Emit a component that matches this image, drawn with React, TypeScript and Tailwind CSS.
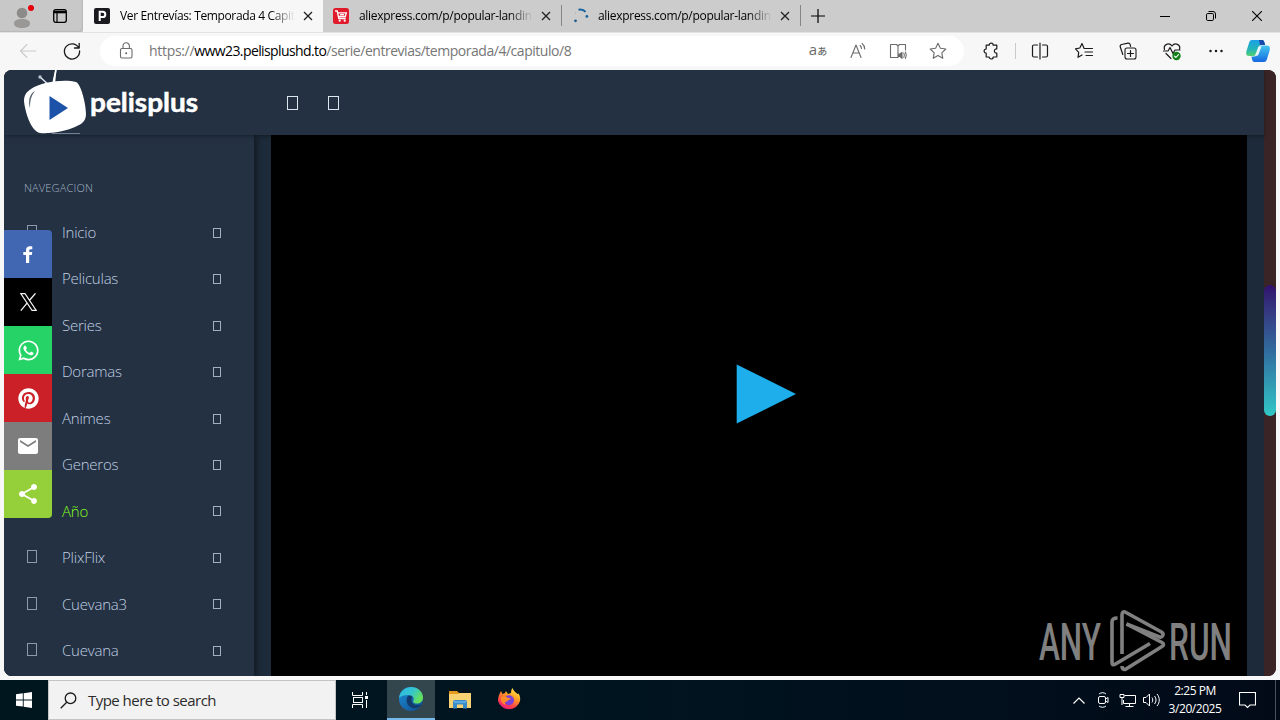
import type { ReactNode } from "react";
import { FaPinterest, FaWhatsapp } from "react-icons/fa6";
import { MdEmail, MdShare } from "react-icons/md";

type NavItem = { label: string; active?: boolean };

const navItems: NavItem[] = [
  { label: "Inicio" },
  { label: "Peliculas" },
  { label: "Series" },
  { label: "Doramas" },
  { label: "Animes" },
  { label: "Generos" },
  { label: "Año", active: true },
  { label: "PlixFlix" },
  { label: "Cuevana3" },
  { label: "Cuevana" },
];

const shareButtons = [
  { name: "facebook", className: "bg-[#4267b2] rounded-tr", icon: <FacebookLogo /> },
  { name: "x", className: "bg-black", icon: <XLogo /> },
  { name: "whatsapp", className: "bg-[#25d366]", icon: <FaWhatsapp size={23} /> },
  { name: "pinterest", className: "bg-[#cb2027]", icon: <FaPinterest size={21} /> },
  { name: "email", className: "bg-[#7d7d7d]", icon: <MdEmail size={24} /> },
  { name: "share", className: "bg-[#95d03a] rounded-br", icon: <MdShare size={24} /> },
];

function FacebookLogo() {
  return (
    <svg width="10" height="17" viewBox="0 0 10 17" className="mr-[1px]">
      <path d="M3 17V9H.3V6H3V4.200C3 1.500 4.500.3 7 .3c1 0 1.800.1 2.300.2v2.700H7.800C6.500 3.200 6.200 3.800 6.200 4.800V6h3.100l-.5 3H6.200v8z" fill="#fff" />
    </svg>
  );
}

function XLogo() {
  return (
    <svg width="17" height="18" viewBox="0 0 17 18" fill="none" stroke="#f4f4f4" strokeWidth="1.100">
      <path d="M.8.600h4.200L16.200 17.400H12z" />
      <path d="M15.500.300L9.300 7.500M7.300 9.900L.8 17.600" strokeWidth="1.300" />
    </svg>
  );
}

type IconProps = { children: ReactNode; size?: number; className?: string };

// Thin line icon, drawn on a 20x20 grid
function Line({ children, size = 20, className = "" }: IconProps) {
  return (
    <svg
      width={size}
      height={size}
      viewBox="0 0 20 20"
      fill="none"
      stroke="currentColor"
      strokeWidth="1.1"
      strokeLinecap="round"
      strokeLinejoin="round"
      className={`shrink-0 ${className}`}
    >
      {children}
    </svg>
  );
}

function Close() {
  return (
    <svg width="10" height="10" viewBox="0 0 10 10" stroke="#222" strokeWidth="1.3" className="shrink-0">
      <path d="M1 1l8 8M9 1L1 9" />
    </svg>
  );
}

function TabTitle({ children, className }: { children: ReactNode; className: string }) {
  return (
    <span
      className={`shrink-0 whitespace-nowrap text-[12px] leading-4 text-black [mask-image:linear-gradient(to_right,black_86%,transparent)] ${className}`}
    >
      {children}
    </span>
  );
}

function TabBar() {
  return (
    <div className="flex h-8 bg-[#cccccc]">
      <div className="flex h-8 w-[83px] items-center rounded-br bg-[#c8c8c8] shadow-[inset_-1px_-1px_1px_#b8b8b8]">
        <svg width="24" height="26" viewBox="0 0 24 26" className="ml-[10px]">
          <circle cx="12" cy="10" r="5.3" fill="#8d8b8a" />
          <path d="M4 20.500c0-3 3-4.500 8-4.500s8 1.500 8 4.500-3.500 4.500-8 4.500-8-1.500-8-4.500z" fill="#9a9897" />
          <circle cx="21" cy="5" r="3" fill="#e8000b" />
        </svg>
        <svg width="14" height="14" viewBox="0 0 14 14" fill="none" stroke="#000" className="ml-[19px]">
          <rect x=".7" y=".7" width="12.600" height="12.600" rx="2" strokeWidth="1.300" />
          <path d="M1 3h12" strokeWidth="2.600" />
          <path d="M4 3v10" strokeWidth="1.200" />
        </svg>
      </div>
      <div className="flex h-8 w-[240px] items-center bg-[#f7f7f7] pl-[11px]">
        <svg width="16" height="16" viewBox="0 0 16 16">
          <rect width="16" height="16" rx="2" fill="#1b1b1f" />
          <path d="M5.700 13V3.800h3a2.500 2.500 0 0 1 0 5.200h-3" fill="none" stroke="#fff" strokeWidth="2" />
        </svg>
        <TabTitle className="ml-[10px] w-[175px] tracking-[-0.36px]">Ver Entrevías: Temporada 4 Capit</TabTitle>
        <div className="ml-2"><Close /></div>
      </div>
      <div className="flex h-8 w-[239px] items-center rounded-bl-md border-r border-[#8b8b8b] pl-[10px] [border-image:linear-gradient(transparent_18%,#858585_18%,#858585_80%,transparent_80%)_1]">
        <svg width="16" height="16" viewBox="0 0 16 16">
          <rect width="16" height="16" rx="2.500" fill="#e01a2b" />
          <g fill="none" stroke="#fff" strokeWidth="1.300">
            <path d="M2 3h2.200l1.600 7.500h7M4.700 4.800h8.600l-1 3.700H5.500" />
            <path d="M7 6.700h4" />
          </g>
          <circle cx="6.700" cy="12.700" r="1.100" fill="#fff" />
          <circle cx="11.700" cy="12.700" r="1.100" fill="#fff" />
        </svg>
        <TabTitle className="ml-[10px] w-[174px] tracking-[-0.3px]">aliexpress.com/p/popular-landin</TabTitle>
        <div className="ml-[8px]"><Close /></div>
      </div>
      <div className="flex h-8 w-[239px] items-center border-r border-[#8b8b8b] pl-[11px] [border-image:linear-gradient(transparent_18%,#858585_18%,#858585_80%,transparent_80%)_1]">
        <svg width="16" height="16" viewBox="0 0 16 16">
          <path d="M5.500 1.700c3-.7 5.300 0 7 2.200" stroke="#17639f" strokeWidth="2" fill="none" />
          <circle cx="13.900" cy="8.400" r="1.400" fill="#17639f" />
          <circle cx="2.500" cy="4.800" r=".6" fill="#8fabc4" />
          <circle cx="2.500" cy="12.800" r="1.400" fill="#1c5c92" />
        </svg>
        <TabTitle className="ml-[9px] w-[174px] tracking-[-0.3px]">aliexpress.com/p/popular-landin</TabTitle>
        <div className="ml-[8px]"><Close /></div>
      </div>
      <div className="flex w-[34px] items-center justify-center">
        <svg width="14" height="14" viewBox="0 0 14 14" stroke="#000" strokeWidth="1.200">
          <path d="M7 0v14M0 7h14" />
        </svg>
      </div>
      <div className="ml-auto flex h-8 text-black">
        <div className="flex w-[46px] items-center justify-center">
          <svg width="10" height="10" viewBox="0 0 10 10" stroke="currentColor"><path d="M0 5.500h10" /></svg>
        </div>
        <div className="flex w-[46px] items-center justify-center">
          <svg width="10" height="10" viewBox="0 0 10 10" fill="none" stroke="currentColor">
            <rect x=".5" y="2.500" width="7" height="7" rx="1.300" />
            <path d="M2.500.5h4.500a2.500 2.500 0 0 1 2.500 2.500v4.500" />
          </svg>
        </div>
        <div className="flex w-[46px] items-center justify-center">
          <svg width="10" height="10" viewBox="0 0 10 10" stroke="currentColor" strokeWidth="1.100"><path d="M0 0l10 10M10 0L0 10" /></svg>
        </div>
      </div>
    </div>
  );
}

function Slot({ children, className = "w-[44px]" }: { children: ReactNode; className?: string }) {
  return <div className={`flex h-[30px] shrink-0 items-center justify-center ${className}`}>{children}</div>;
}

function Toolbar() {
  return (
    <div className="flex h-[38px] items-center border-t border-[#e3e3e3] bg-[#f7f7f7] pb-[1px] pl-[6px] text-[#1b1b1b]">
      <Slot>
        <Line className="text-[#cccccc]"><path d="M18 10H2.500M9 3.500L2.500 10 9 16.500" /></Line>
      </Slot>
      <Slot>
        <Line><path d="M16.800 7A7.600 7.600 0 1 0 17.600 10M17.200 2.300V7h-4.700" strokeWidth="1.300" /></Line>
      </Slot>
      <div className="ml-[6px] flex h-[30px] w-[864px] items-center rounded-full bg-white pr-[6px] pl-[16px] text-[#6b6b6b]">
        <Line>
          <rect x="4.500" y="7.500" width="11.500" height="9.500" rx="1.500" />
          <path d="M7 7.500V5a3.200 3.200 0 0 1 6.400 0v2.500" />
          <circle cx="10.200" cy="12.200" r=".5" fill="currentColor" />
        </Line>
        <div className="ml-[13px] text-[14px] leading-5 tracking-[-0.47px] whitespace-nowrap text-[#767676]">
          <span className="tracking-[-0.31px]">https://</span>
          <span className="tracking-[-0.6px] text-black">www23.pelisplushd.to</span>/serie/entrevias/temporada/4/capitulo/8
        </div>
        <div className="ml-auto flex">
          <Slot className="w-10">
            <span className="flex items-baseline pb-[3px] text-[15px] leading-none">a<span className="font-['Noto_Sans_CJK_JP',sans-serif] text-[10px] leading-none font-medium">あ</span></span>
          </Slot>
          <Slot className="w-10">
            <Line>
              <path d="M3 16.500L8 4l5 12.500M4.800 12h6.500M12 4.500c1 .8 1.500 1.800 1.500 3M14 2.500c1.700 1.300 2.700 3 2.700 5.500" />
            </Line>
          </Slot>
          <Slot className="w-10">
            <Line>
              <path d="M10 16.500H2.500v-13h6L10 5l1.500-1.500h6V9M10 5v11.500" />
              <path d="M10.500 13v2.500h1.500l2 1.800v-6l-2 1.700z" fill="currentColor" />
              <path d="M15.800 12c.8 1.500.8 3 0 4.500M17.500 11c1 2 1 4.500 0 6.500" />
            </Line>
          </Slot>
          <Slot className="w-10">
            <Line><path d="M10 2.300l2.400 5 5.400.7-4 3.800 1 5.500-4.800-2.700-4.800 2.700 1-5.500-4-3.800 5.400-.7z" /></Line>
          </Slot>
        </div>
      </div>
      <div className="ml-[5px] flex items-center">
        <Slot>
          <Line>
            <path d="M5.200 4.200h3a2 2 0 0 1 4 0h3.600v3.600c-3.200-.2-3.200 4.600 0 4.400v3.800h-3.600a2 2 0 0 1-4 0h-3v-3.800a2 2 0 0 1 0-4.200z" strokeWidth="1.200" />
          </Line>
        </Slot>
        <div className="mx-[2px] h-4 w-px bg-[#c9c9c9]" />
        <Slot>
          <Line><path d="M7.500 4H4a1.500 1.500 0 0 0-1.500 1.500v9A1.500 1.500 0 0 0 4 16h3.500M12.500 4H16a1.500 1.500 0 0 1 1.500 1.500v9A1.500 1.500 0 0 1 16 16h-3.500M10 2v16" strokeWidth="1.200" /></Line>
        </Slot>
        <Slot>
          <Line><path d="M11.500 7.500L10 7.300 8 2.500 5.800 7l-4.300.8 3.200 3.500-.7 5 4-2.300M12 7.500h6.500M11 11h7.500M12 14.500h6.500" strokeWidth="1.200" /></Line>
        </Slot>
        <Slot>
          <Line>
            <rect x="7" y="7" width="11" height="11" rx="2" />
            <path d="M12.500 9.500v6M9.500 12.500h6M4.800 13.500L2.300 6a2 2 0 0 1 1.200-2.500l6.500-1.300a2 2 0 0 1 2.200 1.500l.4 1.600" strokeWidth="1.200" />
          </Line>
        </Slot>
        <Slot>
          <Line>
            <path d="M2.500 8.500C1 3.500 7 1 10 5c3-4 9-1.500 7.500 3.500M1.500 10H6l2-3.500 3 6 2-3.500h5M4 12.500l5 5" strokeWidth="1.200" />
            <circle cx="14.500" cy="15" r="4.200" fill="#15801a" stroke="none" />
            <path d="M12.500 15.200l1.400 1.300 2.600-2.800" stroke="#fff" />
          </Line>
        </Slot>
        <Slot>
          <Line><path d="M4.500 10h.01M10 10h.01M15.500 10h.01" strokeWidth="2.500" /></Line>
        </Slot>
        <Slot className="w-10">
          <svg width="24" height="24" viewBox="0 0 24 24">
            <defs>
              <linearGradient id="cpA" x1="0" y1="0" x2="0" y2="1"><stop stopColor="#1b9ee8" /><stop offset=".6" stopColor="#25b7b5" /><stop offset="1" stopColor="#59cf70" /></linearGradient>
              <linearGradient id="cpB" x1="0" y1="0" x2="0" y2="1"><stop stopColor="#45c6ef" /><stop offset="1" stopColor="#1669e0" /></linearGradient>
            </defs>
            <path d="M6 1h10c2 0 2.500 2 3 5h-3c-2 0-3 1-3.600 3l-1.600 5c-.6 2-1.300 3-4 3H3c-3 0-3.300-2.500-2.500-5L3 4c.6-2 1.300-3 3-3z" fill="url(#cpA)" />
            <path d="M13 1h3c2 0 2.500 2 3 5h-5z" fill="#1749a8" />
            <path d="M18 23H8.500c-2 0-2.500-2-3-5.500H8c2 0 3-1 3.600-3L13 9.500c.6-2 1.500-3 4-3h4c3 0 3.300 2.500 2.500 5.500L21 20c-.6 2-1.300 3-3 3z" fill="url(#cpB)" />
            <path d="M12.500 7.500h3l-3.500 9H9z" fill="#eaf6fb" />
          </svg>
        </Slot>
      </div>
    </div>
  );
}

function PelisplusLogo() {
  return (
    <svg width="178" height="65" viewBox="0 0 178 65" className="ml-[18px]">
      <path d="M28 16L18 7M31 14l3-14" stroke="#e8edf3" strokeWidth="1.400" />
      <path d="M30 15l3-15 1.500 0-1.500 14z" fill="#fff" />
      <circle cx="18" cy="7" r="1.700" fill="#b9c6d4" />
      <path d="M9 19C20 11 44 9 54 12c5 2 10 22 10 32 0 7-4 10-11 13-9 4-25 7-35 6C9 61 3 42 2 31c0-5 2-9 7-12z" fill="#fff" />
      <path d="M13 21c-6 3-7 11-5 17 0-7 1-12 5-17z" fill="#5d6670" />
      <path d="M27.500 26v24L46 38z" fill="#1c52a8" />
      <path d="M30 63.500h28" stroke="#738091" />
      <text x="68" y="42" textLength="108" lengthAdjust="spacingAndGlyphs" fill="#fff" stroke="#fff" strokeWidth=".5" fontFamily="Lato, sans-serif" fontWeight="700" fontSize="26">
        pelisplus
      </text>
    </svg>
  );
}

function Sidebar() {
  return (
    <aside className="z-10 h-full w-[250px] shrink-0 bg-[#233143] pt-[44px] shadow-[2px_0_6px_rgba(0,0,0,0.45)]">
      <div className="ml-5 text-[11px] leading-[18px] font-light tracking-[0.16px] text-[#a6b3c2]">NAVEGACION</div>
      <ul className="mt-[12.6px]">
        {navItems.map((item) => (
          <li key={item.label} className="flex h-[46.45px] items-center">
            <span className="mb-[2px] ml-[23px] h-[13px] w-[10px] shrink-0 border border-[#8c9aab]" />
            <span
              className={`mb-[1.600px] ml-[25px] text-[15px] leading-5 font-light tracking-[-0.22px] ${
                item.active ? "text-[#86ff1c]" : "text-[#c0d0e2]"
              }`}
            >
              {item.label}
            </span>
            <span className="mr-[33px] ml-auto h-[10px] w-[8px] border border-[#9fb0c2]" />
          </li>
        ))}
      </ul>
    </aside>
  );
}

function ShareBar() {
  return (
    <div className="absolute top-[160px] left-0 z-20 flex w-12 flex-col text-white">
      {shareButtons.map((b) => (
        <button key={b.name} className={`flex h-12 w-12 items-center justify-center ${b.className}`}>
          {b.icon}
        </button>
      ))}
    </div>
  );
}

function Watermark() {
  return (
    <svg width="200" height="64" viewBox="0 0 200 64" className="absolute right-[9px] bottom-[3px]">
      <g fill="#808080" fontFamily="Roboto, sans-serif" fontSize="52" fontWeight="500">
        <text x="1" y="50.500" textLength="62" lengthAdjust="spacingAndGlyphs">ANY</text>
        <text x="131" y="50.500" textLength="63" lengthAdjust="spacingAndGlyphs">RUN</text>
      </g>
      <g fill="none" stroke="#808080" strokeWidth="3.600" strokeLinejoin="round">
        <path d="M79.500 9c-3 0-5.500 1-5.500 4v40c0 3 1 3.500 3.500 2L112 34.500" />
        <path d="M84 45V6c0-3 1.500-4 4-2.500L123.500 23c3 2 1 6-2 5L88.500 15" />
        <path d="M88.500 15l35.500 18.500c2 1.200 2 2.800 0 4L88 60c-2.500 1-4 0-4-3" />
      </g>
    </svg>
  );
}

function Page() {
  return (
    <div className="relative mx-1 flex h-[606px] overflow-hidden rounded-lg bg-[#3a2426]">
      <div className="flex w-[1260px] flex-col bg-[#1d2a39]">
        <header className="z-20 flex h-[65px] shrink-0 items-center bg-[#233143] shadow-[0_1px_4px_rgba(0,0,0,0.35)]">
          <PelisplusLogo />
          <span className="ml-[87px] h-[14px] w-[11px] border border-[#dce6f0]" />
          <span className="ml-[30px] h-[14px] w-[11px] border border-[#dce6f0]" />
        </header>
        <div className="flex min-h-0 flex-1">
          <Sidebar />
          <main className="z-20 ml-[17px] flex w-[976px] items-center justify-center bg-black">
            <svg width="60" height="60" viewBox="0 0 60 60" className="mt-[-23px] ml-[14px]">
              <path d="M.7.500v59L60 30z" fill="#1eaeec" />
            </svg>
          </main>
        </div>
      </div>
      <div className="w-3 bg-[#3a2426] pt-[215px]">
        <div className="h-[131px] w-3 rounded-[6px] bg-linear-to-b from-[#30106c] via-[#306b9e] to-[#30c8c6]" />
      </div>
      <ShareBar />
      <div className="absolute right-[29px] bottom-0 z-20">
        <Watermark />
      </div>
    </div>
  );
}

function EdgeLogo() {
  return (
    <svg width="26" height="26" viewBox="0 0 26 26">
      <defs>
        <linearGradient id="edTop" x1="0" y1="0" x2="1" y2=".5"><stop stopColor="#2cb8e8" /><stop offset=".55" stopColor="#35c5cf" /><stop offset="1" stopColor="#66e05a" /></linearGradient>
        <linearGradient id="edLow" x1="0" y1="0" x2="1" y2="1"><stop stopColor="#1d8fd8" /><stop offset="1" stopColor="#114a8b" /></linearGradient>
      </defs>
      <circle cx="13" cy="13" r="12" fill="url(#edLow)" />
      <path d="M1 12C2 5 7 1 13 1c7 0 12 5 12 10.500 0 4-3 6-6 6-3.500 0-4.500-1.500-3.500-3 1-2-.5-5.500-5-5.500-4 0-8 1-9.500 3z" fill="url(#edTop)" />
      <path d="M10 10c-3 4-1 11 5 12 4 .7 7-1 8.500-3.500-5 2-9.500 0-10-4 0-2 .5-3 1-3.500-1-1-2.500-1.500-4.500-1z" fill="#123b6b" />
    </svg>
  );
}

function FolderIcon() {
  return (
    <svg width="22" height="20" viewBox="0 0 22 20">
      <path d="M0 1h8l2 2h12v5H0z" fill="#e39a1d" />
      <path d="M0 4h9l1.500-1H22v15H0z" fill="#f7d272" />
      <path d="M4 18.500v-6.500a2 2 0 0 1 2-2h10a2 2 0 0 1 2 2v6.500h-4v-4H8v4z" fill="#3b8bc8" />
      <path d="M5 12h12" stroke="#62b5e5" strokeWidth="1.500" />
    </svg>
  );
}

function FirefoxIcon() {
  return (
    <svg width="24" height="24" viewBox="0 0 24 24">
      <defs>
        <linearGradient id="ff" x1=".8" y1="0" x2=".25" y2="1"><stop stopColor="#fff14a" /><stop offset=".4" stopColor="#ff9a25" /><stop offset=".75" stopColor="#ff3d4b" /><stop offset="1" stopColor="#e3168c" /></linearGradient>
      </defs>
      <path d="M1 12c0-3 1-5 2-7l1-2 1.500 3L8 5l1-2 2 3 3-1c0-2 .5-4 1.500-5 1 3 3 4 5 6l1-.5c1.500 2 2 4.500 1.500 7.500A11.500 11.500 0 0 1 1 13z" fill="url(#ff)" />
      <circle cx="12" cy="12.300" r="5" fill="#7a43d6" />
      <path d="M4 9c3-1.500 5-1 7 1l3 0c-1 2-3 1.500-4 3.500-2 0-3 2-1 3.500-4-1-6-4-5-8z" fill="#ff8b2b" />
    </svg>
  );
}

function Taskbar() {
  return (
    <div className="flex h-10 bg-linear-to-r from-[#00161f] via-[#001420] to-[#020a18] text-white">
      <div className="flex w-12 items-center justify-center">
        <svg width="16" height="16" viewBox="0 0 16 16" fill="#fff">
          <path d="M0 2.300L6.800 1.300v6.200H0zM7.700 1.200L16 0v7.500H7.700zM0 8.400h6.800v6.200L0 13.700zM7.700 8.400H16V16l-8.300-1.200z" />
        </svg>
      </div>
      <div className="flex w-[288px] items-center border border-[#c4c4c4] bg-[#f2f2f2] pl-[11px]">
        <svg width="17" height="17" viewBox="0 0 17 17" fill="none" stroke="#1b1b1b" strokeWidth="1.300">
          <circle cx="10.500" cy="6.300" r="5.300" />
          <path d="M6.700 10.200L.7 16.200" />
        </svg>
        <span className="ml-[11px] text-[15px] leading-5 tracking-[-0.53px] text-[#2b2b2b]">Type here to search</span>
      </div>
      <div className="flex w-[51px] items-center justify-center pr-[3px]">
        <svg width="16" height="16" viewBox="0 0 16 16" fill="none" stroke="#fff">
          <path d="M.5 0v3.500h10V0M.5 16v-3.500h10V16M14.500 0v3M14.500 8v8" />
          <rect x="1.500" y="5.500" width="9" height="5" />
          <path d="M13 5.500h3" strokeWidth="3" />
        </svg>
      </div>
      <div className="flex w-12 items-center justify-center border-b-2 border-[#76b9ed] bg-[#33464e]">
        <EdgeLogo />
      </div>
      <div className="flex w-[50px] items-center justify-center"><FolderIcon /></div>
      <div className="flex w-12 items-center justify-center"><FirefoxIcon /></div>
      <div className="ml-auto flex items-center">
        <Slot className="w-6">
          <svg width="12" height="7" viewBox="0 0 12 7" fill="none" stroke="#fff" strokeWidth="1.200"><path d="M.5 6.500L6 1l5.500 5.500" /></svg>
        </Slot>
        <Slot className="w-6">
          <svg width="12" height="16" viewBox="0 0 12 16" fill="none" stroke="#fff">
            <rect x="1.500" y="4.500" width="7" height="7" rx="1.500" />
            <path d="M8.500 7l2.500-1.500v5L8.500 9M2 2C4 .3 7 .3 9 2M2 14c2 1.700 5 1.700 7 0" />
          </svg>
        </Slot>
        <Slot className="w-6">
          <svg width="17" height="15" viewBox="0 0 17 15" fill="none" stroke="#fff">
            <path d="M5.500 2.500h11v8H4.500V7M10.500 10.500v3M6.500 13.500h8" />
            <path d="M1 1.500h4v3H1zM3 4.500V12" />
          </svg>
        </Slot>
        <Slot className="w-6">
          <svg width="17" height="14" viewBox="0 0 17 14" fill="none" stroke="#fff">
            <path d="M.5 4.500h2.500L6.500 1v12L3 9.500H.5zM9 4.500c1 1.500 1 3.500 0 5M11.500 3c2 2.500 2 5.500 0 8M14 1c3 3.500 3 8.500 0 12" />
          </svg>
        </Slot>
        <div className="w-[64px] text-center text-[12px] leading-[18px] tracking-[-0.45px]">
          <div>2:25 PM</div>
          <div>3/20/2025</div>
        </div>
        <div className="flex w-[40px] items-center justify-center">
          <svg width="17" height="17" viewBox="0 0 17 17" fill="none" stroke="#fff" strokeWidth="1.100">
            <path d="M.5.5h16v12.500h-5.500L8.500 15.500 6 13H.5z" />
          </svg>
        </div>
        <div className="mr-1 ml-2 h-10 w-px bg-[#4a515c]" />
      </div>
    </div>
  );
}

export default function App() {
  return (
    <div className="flex h-[720px] w-[1280px] flex-col overflow-hidden bg-[#f7f7f7] font-['Open_Sans','Noto_Sans',sans-serif]">
      <TabBar />
      <Toolbar />
      <Page />
      <div className="h-1 shrink-0 bg-[#f9f9f9]" />
      <Taskbar />
    </div>
  );
}
